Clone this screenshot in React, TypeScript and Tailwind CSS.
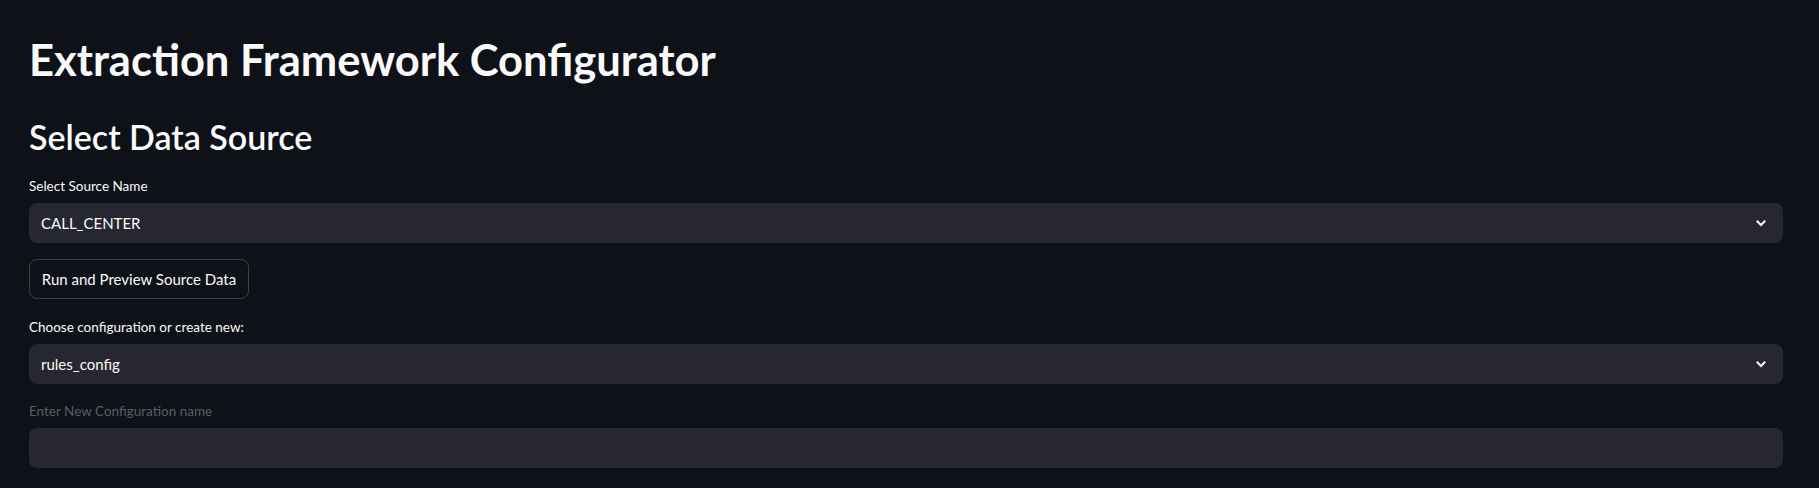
import React from 'react';

const font = { fontFamily: 'Lato, "Noto Sans", sans-serif' };

const Chevron: React.FC = () => (
  <svg width="12" height="12" viewBox="0 0 12 12" className="text-[#fafafa]">
    <path d="M2.5 4.5 L6 8 L9.5 4.5" fill="none" stroke="currentColor" strokeWidth="2" strokeLinecap="square" />
  </svg>
);

const SelectBox: React.FC<{ value: string }> = ({ value }) => (
  <div className="flex h-10 items-center justify-between rounded-lg bg-[#262730] pl-3 pr-4">
    <span className="text-[15px] text-[#fafafa]">{value}</span>
    <Chevron />
  </div>
);

const Label: React.FC<{ text: string; muted?: boolean }> = ({ text, muted }) => (
  <div className={`h-5 text-[13.5px] leading-5 ${muted ? 'text-[#5b5d64]' : 'text-[#fafafa]'}`}>{text}</div>
);

const App: React.FC = () => {
  return (
    <div className="min-h-[488px] bg-[#0e1117] pl-[29px] pr-9" style={font}>
      <h1 className="pt-[33px] text-[43.5px] font-bold leading-[52px] text-[#fafafa]">Extraction Framework Configurator</h1>

      <h2 className="mt-[30px] text-[34px] font-semibold leading-[44px] text-[#fafafa]">Select Data Source</h2>

      <div className="mt-[17px]">
        <Label text="Select Source Name" />
        <div className="mt-[7px]">
          <SelectBox value="CALL_CENTER" />
        </div>
      </div>

      <button className="mt-4 h-10 w-[220px] rounded-lg border border-[#fafafa]/20 text-[15px] text-[#fafafa]">
        Run and Preview Source Data
      </button>

      <div className="mt-[18px]">
        <Label text="Choose configuration or create new:" />
        <div className="mt-[7px]">
          <SelectBox value="rules_config" />
        </div>
      </div>

      <div className="mt-[17px]">
        <Label text="Enter New Configuration name" muted />
        <div className="mt-[7px] h-10 rounded-lg bg-[#262730]" />
      </div>
    </div>
  );
};

export default App;
